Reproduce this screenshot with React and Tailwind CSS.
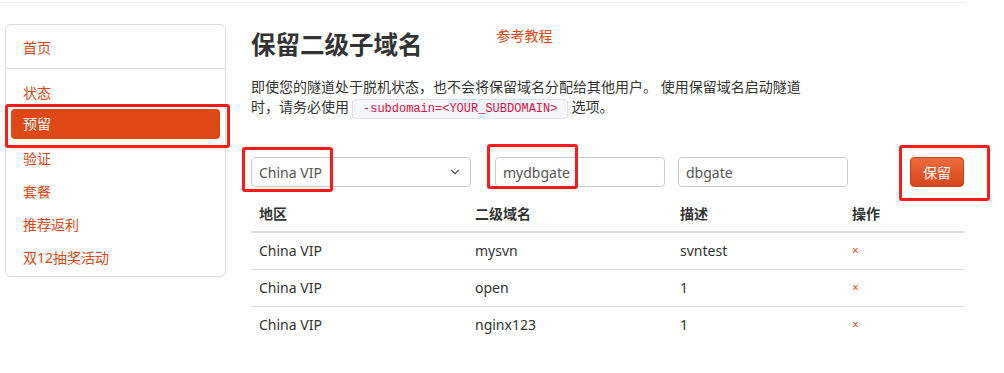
import { ChevronDown } from 'lucide-react'

const menu = ['状态', '预留', '验证', '套餐', '推荐返利', '双12抽奖活动']

const rows = [
  { region: 'China VIP', sub: 'mysvn', desc: 'svntest' },
  { region: 'China VIP', sub: 'open', desc: '1' },
  { region: 'China VIP', sub: 'nginx123', desc: '1' },
]

export default function App() {
  return (
    <div className="relative w-[1004px] h-[373px] bg-white text-[#333] text-[14px] font-['Noto_Sans','Noto_Sans_CJK_SC',sans-serif] overflow-hidden">
      <div className="h-[3px] w-[965px] border-b border-[#eeeeee]" />

      <div className="flex items-start pl-[5px] pt-[21px]">
        {/* sidebar */}
        <nav className="w-[221px] h-[253px] border border-[#dddddd] rounded-[6px]">
          <div className="pt-[8px] pb-[5px] px-[5px]">
            <a className="block h-[30px] leading-[30px] px-[12px] text-[#dd4814]">首页</a>
          </div>
          <div className="h-px bg-[#dddddd]" />
          <div className="pt-[7px] px-[5px] flex flex-col gap-[3px]">
            {menu.map((m) => (
              <a
                key={m}
                className={
                  m === '预留'
                    ? 'block h-[30px] leading-[30px] px-[12px] rounded-[4px] bg-[#dd4814] text-white'
                    : 'block h-[30px] leading-[31px] px-[12px] mt-[1px] -mb-[1px] text-[#dd4814]'
                }
              >
                {m}
              </a>
            ))}
          </div>
        </nav>

        {/* main */}
        <main className="ml-[25px] w-[713px]">
          <div className="flex items-start pt-[3px]">
            <h1 className="text-[24.5px] leading-[36px] font-bold text-[#333]">保留二级子域名</h1>
            <a className="ml-[74px] -mt-[1px] leading-[20px] text-[#dd4814]">参考教程</a>
          </div>

          <p className="mt-[14px] w-[556px] leading-[20px]">
            即使您的隧道处于脱机状态，也不会将保留域名分配给其他用户。 使用保留域名启动隧道时，请务必使用
            <code className="mx-[3px] px-[10px] py-[2px] leading-none font-['Liberation_Mono',monospace] text-[12px] text-[#dd1144] bg-[#f7f7f9] border border-[#e1e1e8] rounded-[3px]">
              -subdomain=&lt;YOUR_SUBDOMAIN&gt;
            </code>
            选项。
          </p>

          <div className="flex items-center mt-[40px] h-[30px]">
            <div className="w-[220px] h-[30px] flex items-center justify-between pl-[7px] pr-[8px] border border-[#cccccc] rounded-[4px] text-[#555]">
              <span>China VIP</span>
              <ChevronDown size={14} strokeWidth={2} className="text-[#555]" />
            </div>
            <div className="ml-[24px] w-[170px] h-[30px] flex items-center pl-[7px] border border-[#cccccc] rounded-[4px] text-[#555]">
              mydbgate
            </div>
            <div className="ml-[13px] w-[170px] h-[30px] flex items-center pl-[7px] border border-[#cccccc] rounded-[4px] text-[#555]">
              dbgate
            </div>
            <button className="ml-[62px] w-[54px] h-[30px] rounded-[4px] border border-[#c9410f] bg-gradient-to-b from-[#ec6b3d] to-[#d7461a] text-white">
              保留
            </button>
          </div>

          <table className="mt-[8px] w-[713px] border-collapse">
            <thead>
              <tr className="h-[37px] border-b-2 border-[#dddddd] text-left">
                <th className="w-[216px] pl-[8px] font-bold">地区</th>
                <th className="w-[205px] pl-[8px] font-bold">二级域名</th>
                <th className="w-[172px] pl-[8px] font-bold">描述</th>
                <th className="pl-[8px] font-bold">操作</th>
              </tr>
            </thead>
            <tbody>
              {rows.map((r, i) => (
                <tr key={i} className={i < rows.length - 1 ? 'h-[37px] border-b border-[#dddddd]' : 'h-[37px]'}>
                  <td className="pl-[8px]">{r.region}</td>
                  <td className="pl-[8px]">{r.sub}</td>
                  <td className="pl-[8px]">{r.desc}</td>
                  <td className="pl-[8px] text-[12px] text-[#e5502a]">×</td>
                </tr>
              ))}
            </tbody>
          </table>
        </main>
      </div>

      {/* red annotation boxes */}
      <div className="absolute left-[5px] top-[104px] w-[225px] h-[44px] border-[3px] border-[#ff1a1a] rounded-[3px]" />
      <div className="absolute left-[242px] top-[147px] w-[91px] h-[45px] border-[3px] border-[#ff1a1a] rounded-[3px]" />
      <div className="absolute left-[487px] top-[144px] w-[91px] h-[45px] border-[3px] border-[#ff1a1a] rounded-[3px]" />
      <div className="absolute left-[899px] top-[145px] w-[91px] h-[56px] border-[3px] border-[#ff1a1a] rounded-[3px]" />
    </div>
  )
}
